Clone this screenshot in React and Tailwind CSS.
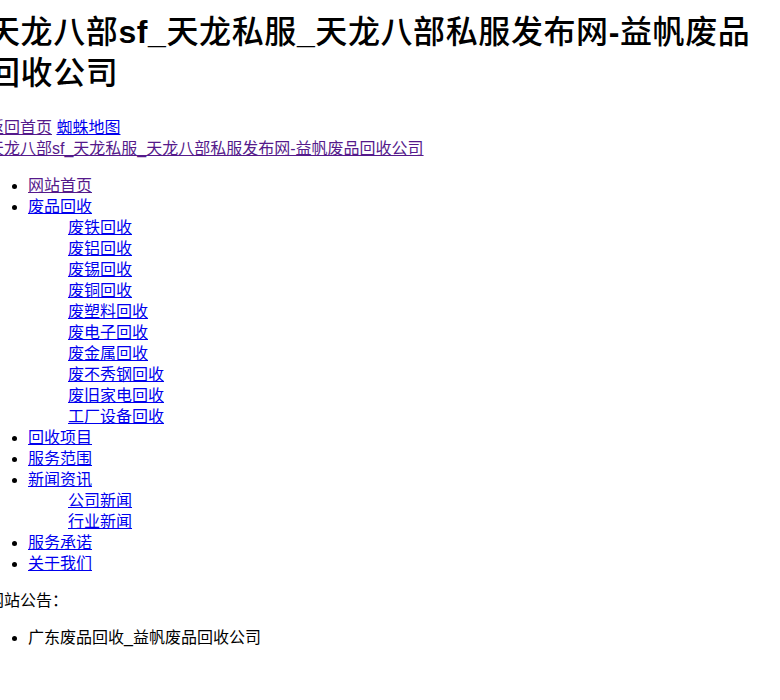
import React from "react";

const subRecycle = [
  "废铁回收",
  "废铝回收",
  "废锡回收",
  "废铜回收",
  "废塑料回收",
  "废电子回收",
  "废金属回收",
  "废不秀钢回收",
  "废旧家电回收",
  "工厂设备回收",
];

const subNews = ["公司新闻", "行业新闻"];

const visited = "text-[#551a8b] underline";
const link = "text-[#0000ee] underline";

function SubList({ items }) {
  return (
    <ul className="list-none pl-10">
      {items.map((t) => (
        <li key={t}>
          <a href="#" className={link}>
            {t}
          </a>
        </li>
      ))}
    </ul>
  );
}

export default function App() {
  return (
    <div
      className="-ml-3 w-[780px] bg-white text-black text-[16px] leading-[21px]"
      style={{ fontFamily: '"Liberation Sans", "Noto Sans CJK SC", sans-serif' }}
    >
      {/* Title: latin bold, CJK medium */}
      <h1 className="pt-[12px] text-[32px] leading-[41px] font-medium tracking-[0.6px]">
        天龙八部<b className="font-bold">sf_</b>天龙私服<b className="font-bold">_</b>
        天龙八部私服发布网<b className="font-bold">-</b>益帆废品回收公司
      </h1>

      {/* Top links */}
      <div className="mt-[23px]">
        <a href="#" className={visited}>
          返回首页
        </a>{" "}
        <a href="#" className={link}>
          蜘蛛地图
        </a>
      </div>
      <div>
        <a href="#" className={visited}>
          天龙八部sf_天龙私服_天龙八部私服发布网-益帆废品回收公司
        </a>
      </div>

      {/* Nav */}
      <ul className="mt-4 list-disc pl-10">
        <li>
          <a href="#" className={visited}>
            网站首页
          </a>
        </li>
        <li>
          <a href="#" className={link}>
            废品回收
          </a>
          <SubList items={subRecycle} />
        </li>
        <li>
          <a href="#" className={link}>
            回收项目
          </a>
        </li>
        <li>
          <a href="#" className={link}>
            服务范围
          </a>
        </li>
        <li>
          <a href="#" className={link}>
            新闻资讯
          </a>
          <SubList items={subNews} />
        </li>
        <li>
          <a href="#" className={link}>
            服务承诺
          </a>
        </li>
        <li>
          <a href="#" className={link}>
            关于我们
          </a>
        </li>
      </ul>

      {/* Notice */}
      <p className="mt-4">网站公告：</p>
      <ul className="mt-4 list-disc pl-10">
        <li>广东废品回收_益帆废品回收公司</li>
      </ul>
    </div>
  );
}
